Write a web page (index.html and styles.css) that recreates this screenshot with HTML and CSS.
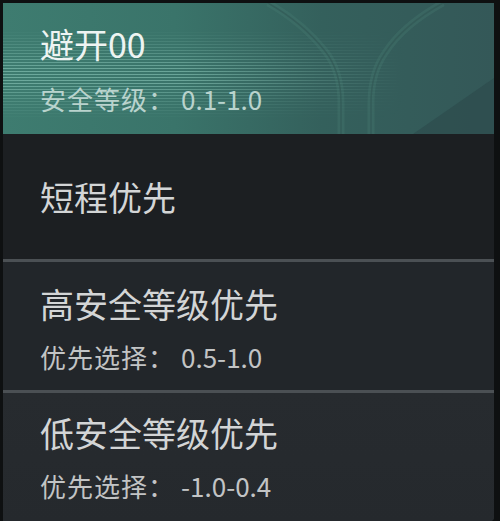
FILE: index.html
```html
<!DOCTYPE html>
<html lang="zh">
<head>
<meta charset="utf-8">
<link rel="stylesheet" href="styles.css">
</head>
<body>
<div class="panel">
  <div class="item active">
    <div class="stripes"><div class="stripes-inner"></div></div>
    <svg class="deco" width="491" height="131" viewBox="0 0 491 131">
      <path d="M265 0 Q300 20 322 48 Q338 68 338 100 L338 131" fill="none" stroke="#4a7f75" stroke-width="7" stroke-opacity="0.3"/>
      <path d="M265 0 Q300 20 322 48 Q338 68 338 100 L338 131" fill="none" stroke="#2e5250" stroke-width="1.5" stroke-opacity="0.5"/>
      <path d="M440 0 Q400 22 382 50 Q368 70 368 100 L368 131" fill="none" stroke="#4a7f75" stroke-width="7" stroke-opacity="0.3"/>
      <path d="M440 0 Q400 22 382 50 Q368 70 368 100 L368 131" fill="none" stroke="#2e5250" stroke-width="1.5" stroke-opacity="0.5"/>
      <path d="M410 131 L491 75 L491 131 Z" fill="#2a4647" fill-opacity="0.5"/>
    </svg>
    <div class="title">避开00</div>
    <div class="sub">安全等级：<span class="num">0.1-1.0</span></div>
  </div>
  <div class="item single">
    <div class="title">短程优先</div>
  </div>
  <div class="sep"></div>
  <div class="item third">
    <div class="title">高安全等级优先</div>
    <div class="sub">优先选择：<span class="num">0.5-1.0</span></div>
  </div>
  <div class="sep"></div>
  <div class="item fourth">
    <div class="title">低安全等级优先</div>
    <div class="sub">优先选择：<span class="num">-1.0-0.4</span></div>
  </div>
</div>
</body>
</html>
```

FILE: styles.css
```css
html, body {
  margin: 0;
  padding: 0;
  background: #0e1011;
  width: 500px;
  height: 521px;
  overflow: hidden;
}
body {
  font-family: "Noto Sans CJK SC", "Noto Sans", sans-serif;
}
.panel {
  margin: 3px 6px 0 3px;
  height: 518px;
  background: #23272b;
  border-bottom-right-radius: 4px;
  overflow: hidden;
  display: flex;
  flex-direction: column;
}
.item {
  position: relative;
  padding-left: 37px;
  display: flex;
  flex-direction: column;
  box-sizing: border-box;
}
.title {
  position: relative;
  font-size: 34px;
  line-height: 40px;
  color: #d3d5d6;
}
.sub {
  position: relative;
  font-size: 26px;
  line-height: 32px;
  letter-spacing: 1px;
  color: #c2c4c5;
}
.num {
  margin-left: 6px;
  letter-spacing: 0;
}
.active {
  height: 131px;
  padding-top: 21px;
  background:
    linear-gradient(90deg, #3e7c70 0%, #3a746a 35%, #34605c 65%, #345858 100%);
}
.stripes {
  position: absolute;
  left: 0;
  top: 26px;
  width: 400px;
  height: 90px;
  -webkit-mask-image: linear-gradient(90deg, #000 0%, #000 45%, transparent 100%);
  mask-image: linear-gradient(90deg, #000 0%, #000 45%, transparent 100%);
}
.stripes-inner {
  width: 100%;
  height: 100%;
  background: repeating-linear-gradient(180deg, rgba(165,225,210,0.45) 0 1px, rgba(0,0,0,0) 1px 3px);
  -webkit-mask-image: linear-gradient(180deg, transparent 0%, rgba(0,0,0,0.5) 25%, #000 45%, #000 60%, rgba(0,0,0,0.4) 80%, transparent 100%);
  mask-image: linear-gradient(180deg, transparent 0%, rgba(0,0,0,0.5) 25%, #000 45%, #000 60%, rgba(0,0,0,0.4) 80%, transparent 100%);
}
.deco {
  position: absolute;
  left: 0;
  top: 0;
}
.active .title {
  color: #eef4f2;
}
.active .sub {
  color: #b9d3cd;
  margin-top: 19px;
}
.single {
  height: 125px;
  padding-top: 43px;
  background: #1c1f22;
}
.sep {
  height: 3px;
  flex: none;
  background: #4b5054;
}
.third {
  height: 128px;
  padding-top: 22px;
  background: #22262a;
}
.third .sub, .fourth .sub {
  margin-top: 17px;
}
.fourth {
  flex: 1;
  padding-top: 20px;
  background: linear-gradient(180deg, #272b2f 0%, #25292d 100%);
}
```
